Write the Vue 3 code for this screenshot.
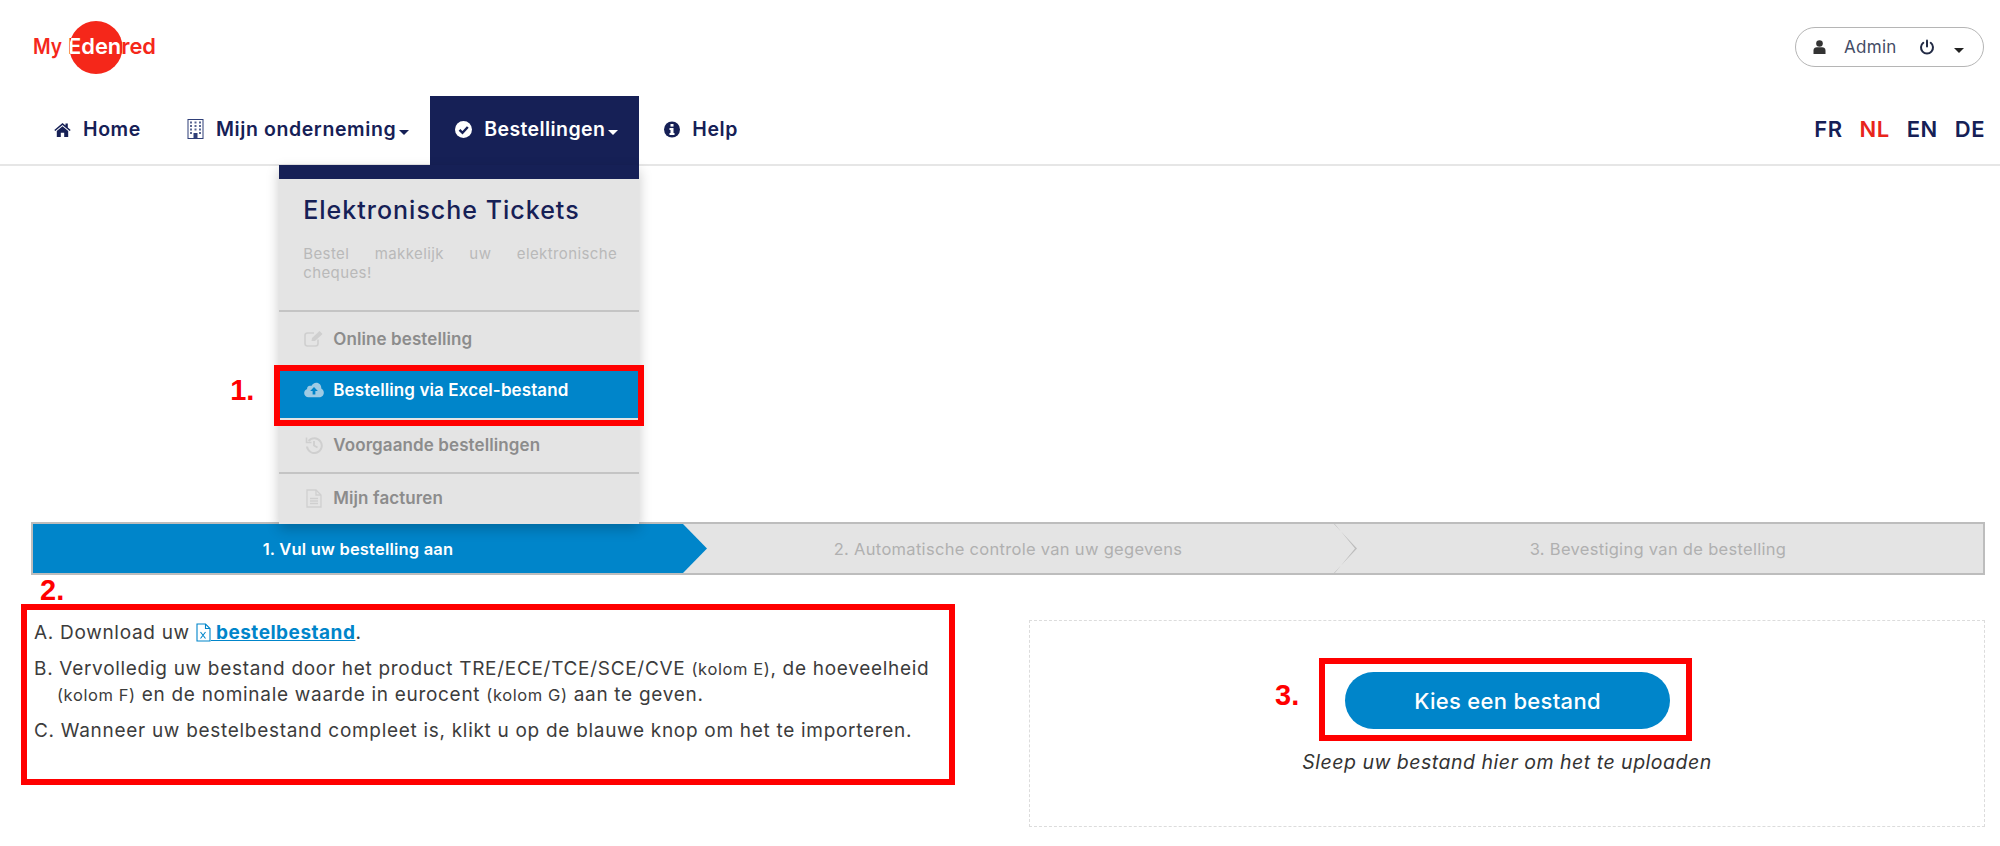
<script setup>
const navItems = [
  { label: "Home", icon: "home" },
  { label: "Mijn onderneming", icon: "building", caret: true },
  { label: "Bestellingen", icon: "check", caret: true, active: true },
  { label: "Help", icon: "info" },
];
const languages = ["FR", "NL", "EN", "DE"];
const steps = ["1. Vul uw bestelling aan", "2. Automatische controle van uw gegevens", "3. Bevestiging van de bestelling"];
</script>

<template>
  <div class="page">
    <header class="top">
      <svg class="logo" width="125" height="54" viewBox="0 0 125 54">
        <defs>
          <clipPath id="logoCircle"><ellipse cx="63" cy="26.500" rx="26.500" ry="26.500" /></clipPath>
        </defs>
        <text x="0" y="33" class="logo-text" fill="#f5271a" textLength="29" lengthAdjust="spacingAndGlyphs">My</text>
        <circle cx="63" cy="26.500" r="26.500" fill="#f5271a" />
        <text x="35" y="33" class="logo-text" fill="#f5271a" textLength="88" lengthAdjust="spacingAndGlyphs">Edenred</text>
        <g clip-path="url(#logoCircle)">
          <text x="35" y="33" class="logo-text" fill="#fff" textLength="88" lengthAdjust="spacingAndGlyphs">Edenred</text>
        </g>
      </svg>
      <div class="user-pill">
        <svg width="13" height="14" viewBox="0 0 13 14"><circle cx="6.500" cy="3.500" r="3.300" fill="#333" /><path d="M0.500 14V10.500C0.500 8.500 2 7.300 3.800 7.300H9.200C11 7.300 12.500 8.500 12.500 10.500V14Z" fill="#333" /></svg>
        <span class="user-name">Admin</span>
        <svg class="power" width="16" height="16" viewBox="0 0 16 16" fill="none" stroke="#222b45" stroke-width="2" stroke-linecap="round"><path d="M8 1.500V7.500" /><path d="M4.300 3.800A6 6 0 1 0 11.700 3.800" /></svg>
        <span class="caret dark"></span>
      </div>
    </header>

    <nav class="nav">
      <div v-for="item in navItems" :key="item.label" class="nav-item" :class="{ active: item.active }">
        <svg v-if="item.icon === 'home'" width="17" height="15" viewBox="0 0 17 15" fill="#162056"><path d="M8.500 1L0.300 8L1.300 9.100L8.500 3L15.700 9.100L16.700 8L13.800 5.500V1.500H11.500V3.500Z" /><path d="M8.500 4.300L2.800 9.100V15H6.800V10.800H10.200V15H14.200V9.100Z" /></svg>
        <svg v-if="item.icon === 'building'" width="17" height="20" viewBox="0 0 17 20"><rect x="1" y="0.500" width="15" height="19" fill="#fff" stroke="#2f3f78" /><g fill="#5a6792"><rect x="3" y="2.500" width="2" height="2" /><rect x="7.500" y="2.500" width="2" height="2" /><rect x="12" y="2.500" width="2" height="2" /><rect x="3" y="6" width="2" height="2" /><rect x="7.500" y="6" width="2" height="2" /><rect x="12" y="6" width="2" height="2" /><rect x="3" y="9.500" width="2" height="2" /><rect x="7.500" y="9.500" width="2" height="2" /><rect x="12" y="9.500" width="2" height="2" /><rect x="3" y="13" width="2" height="2" /><rect x="12" y="13" width="2" height="2" /></g><rect x="6.500" y="14" width="4" height="5.500" fill="#2f3f78" /></svg>
        <svg v-if="item.icon === 'check'" width="17" height="17" viewBox="0 0 17 17"><circle cx="8.500" cy="8.500" r="8.500" fill="#fff" /><path d="M4.500 8.800L7.500 11.800L12.800 6" fill="none" stroke="#162056" stroke-width="2.400" /></svg>
        <svg v-if="item.icon === 'info'" width="16" height="17" viewBox="0 0 16 17"><circle cx="8" cy="8.500" r="8" fill="#162056" /><rect x="6.500" y="3" width="3" height="2.600" fill="#fff" /><path d="M5.500 7H9.500V12H10.500V14H5.500V12H6.500V9H5.500Z" fill="#fff" /></svg>
        <span class="nav-label">{{ item.label }}</span>
        <span v-if="item.caret" class="caret"></span>

        <div v-if="item.active" class="menu">
          <div class="menu-head">
            <h3>Elektronische Tickets</h3>
            <p>Bestel makkelijk uw elektronische cheques!</p>
          </div>
          <a class="menu-row first">
            <svg width="20" height="17" viewBox="0 0 20 17" fill="none" stroke="#cfcfcf" stroke-width="1.600"><path d="M14 9.500V13.500C14 15 13 16 11.500 16H3.500C2 16 1 15 1 13.500V5.500C1 4 2 3 3.500 3H10" /><path d="M7.500 11L8 8L15.500 1L18.500 4L11 11Z" fill="#cfcfcf" stroke="none" /></svg>
            <span>Online bestelling</span>
          </a>
          <a class="menu-row selected">
            <svg width="22" height="16" viewBox="0 0 22 16"><path d="M5 16C2.300 16 0.200 14 0.200 11.300C0.200 9.200 1.500 7.500 3.400 6.800C3.400 6.600 3.400 6.500 3.400 6.300C3.400 4.500 4.800 3.200 6.500 3.200C7 3.200 7.500 3.300 8 3.500C9.200 1.400 11.200 0 13.500 0C16.800 0 19 2.600 19 5.800V6.400C20.700 7.200 21.800 8.900 21.800 10.900C21.800 13.800 19.500 16 16.700 16Z" fill="#9fcbe4" /><path d="M11 4.800L15.200 9.200H12.500V13H9.500V9.200H6.800Z" fill="#0085ca" /></svg>
            <span>Bestelling via Excel-bestand</span>
            <i class="mark-box"></i>
            <b class="mark-num one">1.</b>
          </a>
          <a class="menu-row">
            <svg width="18" height="18" viewBox="0 0 18 18" fill="none" stroke="#cfcfcf" stroke-width="2"><path d="M3.600 5A7.400 7.400 0 1 1 2 10.500" /><path d="M1.500 1.500V6.500H6.500" stroke-width="1.600" /><path d="M9 5V9.500L12.500 11.500" stroke-width="1.800" /></svg>
            <span>Voorgaande bestellingen</span>
          </a>
          <a class="menu-row last">
            <svg width="16" height="19" viewBox="0 0 16 19" fill="none" stroke="#cfcfcf" stroke-width="1.300"><path d="M1 1H10L15 6V18H1Z" /><path d="M10 1V6H15" /><path d="M4 9.500H12M4 12H12M4 14.500H12" /></svg>
            <span>Mijn facturen</span>
          </a>
        </div>
      </div>
      <div class="languages">
        <a v-for="lang in languages" :key="lang" :class="{ current: lang === 'NL' }">{{ lang }}</a>
      </div>
    </nav>

    <main class="content">
      <div class="stepper">
        <div v-for="(step, i) in steps" :key="step" class="step" :class="{ done: i === 0, arrow: i === 1 }">{{ step }}</div>
      </div>

      <div class="columns">
        <section class="instructions">
          <b class="mark-num two">2.</b>
          <p>A. Download uw
            <a class="file-link"><svg width="15" height="19" viewBox="0 0 15 19" fill="none" stroke="#0085ca" stroke-width="1.100"><path d="M1 1H9.500L14 5.500V18H1Z" /><path d="M9.500 1V5.500H14" /><path d="M4.500 9L9.500 15.500M9.500 9L4.500 15.500" /></svg> bestelbestand</a>.
          </p>
          <p>B. Vervolledig uw bestand door het product TRE/ECE/TCE/SCE/CVE <small>(kolom E)</small>, de hoeveelheid <small>(kolom F)</small> en de nominale waarde in eurocent <small>(kolom G)</small> aan te geven.</p>
          <p>C. Wanneer uw bestelbestand compleet is, klikt u op de blauwe knop om het te importeren.</p>
        </section>

        <section class="dropzone">
          <div class="button-mark">
            <b class="mark-num three">3.</b>
            <button class="choose">Kies een bestand</button>
          </div>
          <em>Sleep uw bestand hier om het te uploaden</em>
        </section>
      </div>
    </main>
  </div>
</template>

<style scoped>
.page {
  font-family: Inter, "Open Sans", sans-serif;
  color: #333;
  height: 846px;
  overflow: hidden;
}

/* HEADER */

.top {
  height: 96px;
  padding: 21px 16px 0 33px;
  box-sizing: border-box;
  display: flex;
  justify-content: space-between;
  align-items: flex-start;
}

.logo-text {
  font-family: Inter, sans-serif;
  font-size: 22px;
  font-weight: 600;
}

.user-pill {
  width: 189px;
  height: 40px;
  margin-top: 6px;
  box-sizing: border-box;
  border: 1.5px solid #b5b5b5;
  border-radius: 20px;
  display: flex;
  align-items: center;
  padding-left: 17px;
}

.user-name {
  margin-left: 18px;
  font-size: 17px;
  letter-spacing: 0.3px;
  color: #444c66;
  width: 56px;
}

.power {
  margin-left: 19px;
}

.caret {
  display: inline-block;
  width: 0;
  height: 0;
  margin-left: 3px;
  margin-top: 6px;
  border-left: 5.500px solid transparent;
  border-right: 5.500px solid transparent;
  border-top: 5px solid currentColor;
}

.caret.dark {
  color: #222;
  margin-left: 19px;
  margin-top: 6px;
}

/* NAV */

.nav {
  height: 70px;
  box-sizing: border-box;
  border-bottom: 2px solid #e6e6e6;
  padding: 0 15px 0 29px;
  display: flex;
  align-items: stretch;
}

.nav-item {
  position: relative;
  display: flex;
  align-items: center;
  padding: 0 21px 3px 25px;
  height: 69px;
  box-sizing: border-box;
  color: #162056;
  font-size: 19.500px;
  letter-spacing: 0.6px;
  font-weight: 600;
}

.nav-label {
  margin-left: 12px;
}

.nav-item.active {
  background: #162056;
  color: #fff;
  letter-spacing: 0.4px;
}

.menu {
  position: absolute;
  z-index: 5;
  top: 69px;
  left: -151px;
  width: 360px;
  box-sizing: border-box;
  border-top: 14px solid #162056;
  background: #e4e4e4;
  box-shadow: 0 5px 12px rgba(0, 0, 0, 0.22);
  color: #8c8c8c;
  letter-spacing: 0;
  font-weight: 600;
}

.menu-head {
  height: 133px;
  box-sizing: border-box;
  padding: 18px 22px 0 24px;
  border-bottom: 2px solid #c4c4c4;
}

.menu-head h3 {
  margin: 0;
  font-size: 25px;
  letter-spacing: 1px;
  line-height: 26px;
  font-weight: 500;
  white-space: nowrap;
  color: #162056;
}

.menu-head p {
  margin: 21px 0 0;
  font-size: 15px;
  letter-spacing: 0.4px;
  line-height: 19px;
  font-weight: 400;
  color: #b9b9b9;
  text-align: justify;
}

.menu-row {
  position: relative;
  display: flex;
  align-items: center;
  height: 54px;
  box-sizing: border-box;
  padding-left: 25px;
  font-size: 17px;
  letter-spacing: 0.1px;
}

.menu-row svg {
  flex: none;
  margin-right: 9px;
  width: 20px;
}

.menu-row.first {
  height: 53px;
}

.menu-row.selected {
  height: 47px;
  margin: 6px 0 0;
  padding: 0 0 9px 25px;
  background: #0085ca;
  color: #fff;
}

.menu-row.last {
  height: 52px;
  padding-bottom: 2px;
  border-top: 2px solid #c4c4c4;
}

.mark-box {
  position: absolute;
  left: -5px;
  right: -5px;
  top: -6px;
  bottom: -8px;
  border: 6px solid #f00;
}

.mark-num {
  position: absolute;
  color: #f00;
  font-family: "Liberation Sans", sans-serif;
  font-size: 29px;
  letter-spacing: 0;
  line-height: 32px;
  text-indent: 0;
  font-weight: 700;
}

.mark-num.one {
  left: -49px;
  top: 3px;
}

.languages {
  margin-left: auto;
  display: flex;
  gap: 17px;
  align-items: center;
  height: 66px;
  font-size: 22px;
  letter-spacing: 0.5px;
  font-weight: 600;
  color: #162056;
}

.languages .current {
  color: #e8251c;
}

/* MAIN */

.content {
  padding: 356px 15px 0 31px;
}

.stepper {
  display: flex;
  height: 53px;
  box-sizing: border-box;
  border: 2px solid #bdbdbd;
  background: #e4e4e4;
}

.step {
  position: relative;
  flex: 1;
  display: flex;
  align-items: center;
  justify-content: center;
  font-size: 16.500px;
  letter-spacing: 0.3px;
  color: #b0b0b0;
}

.step.done {
  background: #0085ca;
  color: #fff;
  font-weight: 600;
  letter-spacing: 0.2px;
}

.step.done::after {
  content: "";
  position: absolute;
  top: 0;
  bottom: 0;
  left: 100%;
  width: 24px;
  background: #0085ca;
  clip-path: polygon(0 0, 100% 50%, 0 100%);
}

.step.arrow::after {
  content: "";
  position: absolute;
  top: -1px;
  bottom: -1px;
  left: 100%;
  width: 24px;
  background: #bdbdbd;
  clip-path: polygon(0 0, 100% 50%, 0 100%, 1px 100%, calc(100% - 2px) 50%, 1px 0);
}

.columns {
  display: flex;
  justify-content: space-between;
  align-items: flex-start;
}

.instructions {
  position: relative;
  width: 934px;
  height: 181px;
  margin: 29px 0 0 -10px;
  box-sizing: border-box;
  border: 6px solid #f00;
  padding: 10px 7px 0;
  font-size: 19px;
  letter-spacing: 0.7px;
  line-height: 26px;
  color: #3c3c3c;
}

.instructions p {
  margin: 0 0 10px;
  padding-left: 23px;
  text-indent: -23px;
}

.instructions small {
  font-size: 16.500px;
  letter-spacing: 0.6px;
}

.mark-num.two {
  left: 13px;
  top: -36px;
}

.file-link {
  color: #0085ca;
  font-weight: 700;
  font-size: 19px;
  letter-spacing: 0.5px;
  text-decoration: underline;
  text-indent: 0;
}

.file-link svg {
  vertical-align: -3px;
}

.dropzone {
  width: 956px;
  height: 207px;
  margin-top: 45px;
  box-sizing: border-box;
  border: 1.500px dashed #dcdcdc;
  padding-top: 37px;
  display: flex;
  flex-direction: column;
  align-items: center;
}

.button-mark {
  position: relative;
  margin-left: -3px;
  box-sizing: border-box;
  width: 373px;
  height: 83px;
  border: 6px solid #f00;
  padding: 8px 16px 0 20px;
}

.mark-num.three {
  left: -50px;
  top: 15px;
}

.choose {
  display: block;
  width: 325px;
  height: 57px;
  border: 0;
  border-radius: 29px;
  background: #0085ca;
  color: #fff;
  font-family: inherit;
  font-size: 22px;
  letter-spacing: 0.3px;
  font-weight: 500;
}

.dropzone em {
  margin-top: 9px;
  font-size: 19.500px;
  letter-spacing: 0.5px;
  line-height: 24px;
  color: #333;
}
</style>
